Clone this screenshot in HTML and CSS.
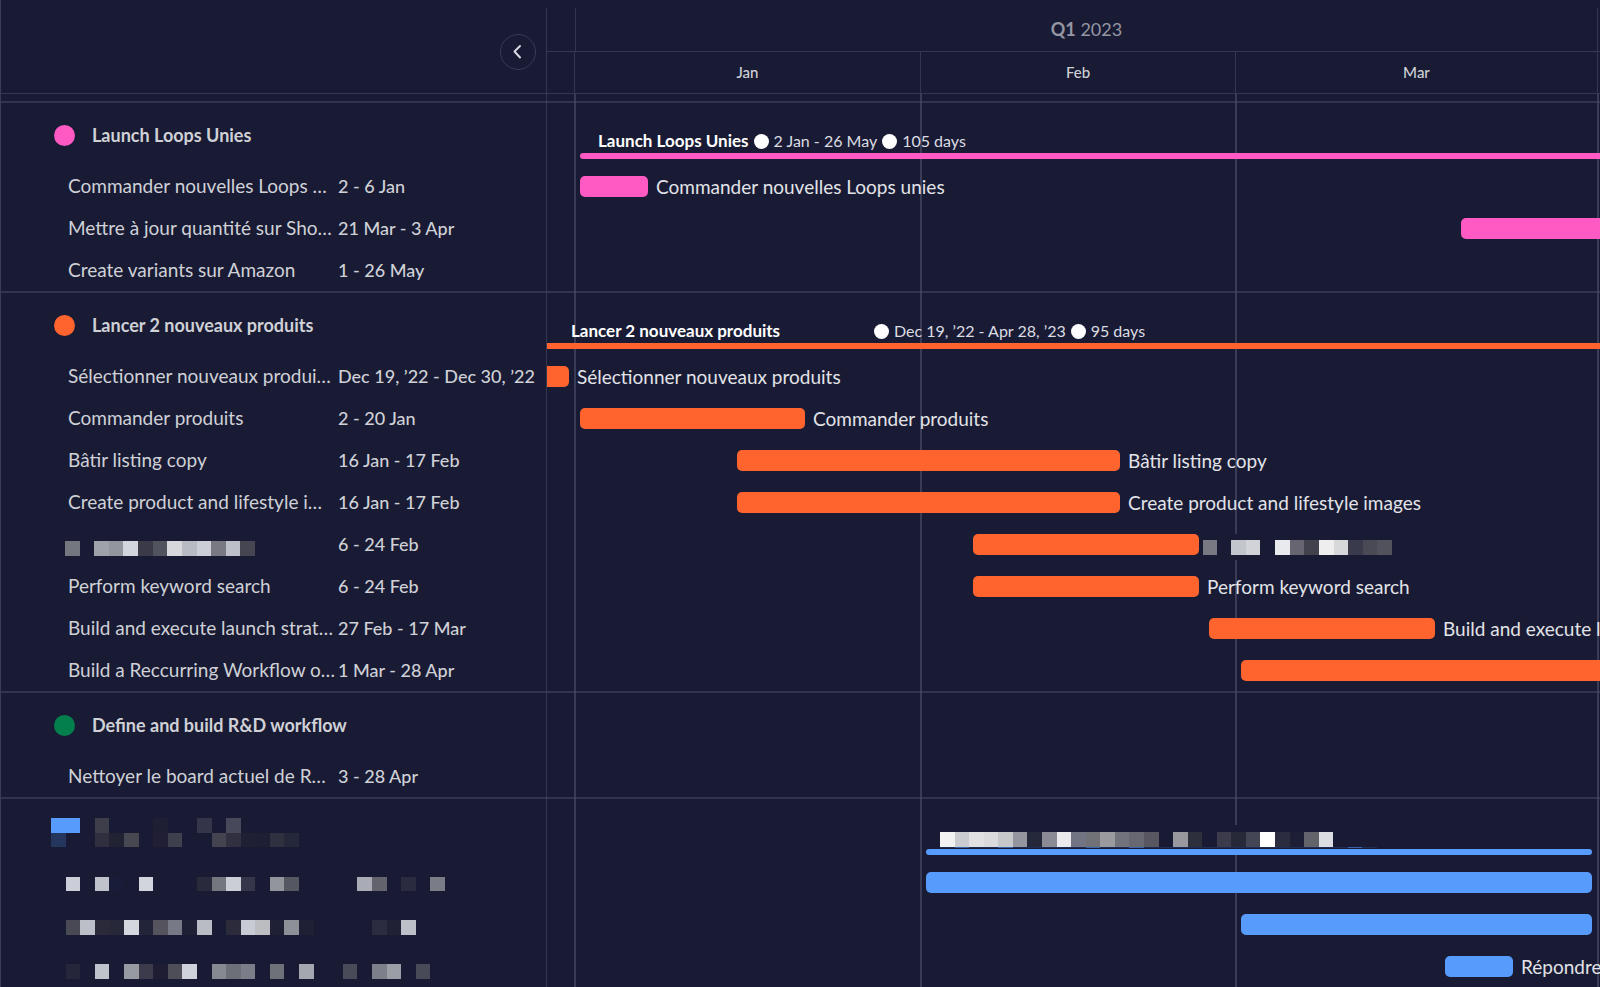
FILE: index.html
```html
<!DOCTYPE html>
<html lang="fr">
<head>
<meta charset="utf-8">
<title>Gantt – Q1 2023</title>
<link rel="stylesheet" href="styles.css">
</head>
<body>
<main class="gantt">
  <header class="head">
    <div class="head-side">
      <button class="collapse" type="button" aria-label="Collapse list">
        <svg viewBox="0 0 20 20" width="20" height="20" aria-hidden="true"><path d="M12 4 6.500 9.500l5.500 6"/></svg>
      </button>
    </div>
    <div class="head-time">
      <div class="quarters"><span></span><span class="quarter"><b>Q1</b> 2023</span><span></span></div>
      <div class="months"><span></span><span>Jan</span><span>Feb</span><span>Mar</span><span></span></div>
    </div>
  </header>

  <div class="body">
    <div class="lines" aria-hidden="true"><i></i><i></i><i></i><i></i><i></i></div>

    <section class="group pink">
      <div class="side">
        <h2 class="title"><i class="dot"></i>Launch Loops Unies</h2>
        <div class="item"><span>Commander nouvelles Loops …</span><span>2 - 6 Jan</span></div>
        <div class="item"><span>Mettre à jour quantité sur Sho…</span><span>21 Mar - 3 Apr</span></div>
        <div class="item"><span>Create variants sur Amazon</span><span>1 - 26 May</span></div>
      </div>
      <div class="time">
        <div class="summary">
          <p class="caption" style="--x:51"><b>Launch Loops Unies</b><i></i>2 Jan - 26 May<i></i>105 days</p>
          <div class="span" style="--x:33;--w:1040"></div>
        </div>
        <div class="row" style="--x:33;--w:68"><div class="bar"></div><span>Commander nouvelles Loops unies</span></div>
        <div class="row" style="--x:914;--w:160"><div class="bar"></div></div>
        <div class="row"></div>
      </div>
    </section>

    <section class="group orange">
      <div class="side">
        <h2 class="title"><i class="dot"></i>Lancer 2 nouveaux produits</h2>
        <div class="item"><span>Sélectionner nouveaux produi…</span><span>Dec 19, ’22 - Dec 30, ’22</span></div>
        <div class="item"><span>Commander produits</span><span>2 - 20 Jan</span></div>
        <div class="item"><span>Bâtir listing copy</span><span>16 Jan - 17 Feb</span></div>
        <div class="item"><span>Create product and lifestyle i…</span><span>16 Jan - 17 Feb</span></div>
        <div class="item"><span class="masked"><svg class="mosaic" viewBox="0 0 13 1" preserveAspectRatio="none" width="190" height="15" aria-hidden="true"><path fill="#757780" d="M0 0h1v1h-1z"/><path fill="#a0a2aa" d="M2 0h1v1h-1z"/><path fill="#94969e" d="M3 0h1v1h-1z"/><path fill="#d2d5dc" d="M4 0h1v1h-1z"/><path fill="#3a3a48" d="M5 0h1v1h-1z"/><path fill="#51535f" d="M6 0h1v1h-1z"/><path fill="#d7d8dc" d="M7 0h1v1h-1z"/><path fill="#b8bbc3" d="M8 0h1v1h-1z"/><path fill="#cbced6" d="M9 0h1v1h-1z"/><path fill="#797983" d="M10 0h1v1h-1z"/><path fill="#bdc0c9" d="M11 0h1v1h-1z"/><path fill="#454652" d="M12 0h1v1h-1z"/></svg></span><span>6 - 24 Feb</span></div>
        <div class="item"><span>Perform keyword search</span><span>6 - 24 Feb</span></div>
        <div class="item"><span>Build and execute launch strat…</span><span>27 Feb - 17 Mar</span></div>
        <div class="item"><span>Build a Reccurring Workflow o…</span><span>1 Mar - 28 Apr</span></div>
      </div>
      <div class="time">
        <div class="summary">
          <p class="caption wide" style="--x:24"><b>Lancer 2 nouveaux produits</b><i></i>Dec 19, ’22 - Apr 28, ’23<i></i>95 days</p>
          <div class="span open" style="--x:0;--w:1073"></div>
        </div>
        <div class="row" style="--x:0;--w:22"><div class="bar open"></div><span>Sélectionner nouveaux produits</span></div>
        <div class="row" style="--x:33;--w:225"><div class="bar"></div><span>Commander produits</span></div>
        <div class="row" style="--x:190;--w:383"><div class="bar"></div><span>Bâtir listing copy</span></div>
        <div class="row" style="--x:190;--w:383"><div class="bar"></div><span>Create product and lifestyle images</span></div>
        <div class="row" style="--x:426;--w:226"><div class="bar"></div><span class="masked"><svg class="mosaic" viewBox="0 0 13 1" preserveAspectRatio="none" width="190" height="15" aria-hidden="true"><path fill="#797983" d="M0.100 0h0.900v1h-0.900z"/><path fill="#c3c5cc" d="M2 0h1v1h-1z"/><path fill="#d2d3d8" d="M3 0h1v1h-1z"/><path fill="#e9eaed" d="M5 0h1v1h-1z"/><path fill="#666571" d="M6 0h1v1h-1z"/><path fill="#42424f" d="M7 0h1v1h-1z"/><path fill="#eeeeef" d="M8 0h1v1h-1z"/><path fill="#d7d8da" d="M9 0h1v1h-1z"/><path fill="#393b4d" d="M10 0h1v1h-1z"/><path fill="#494a55" d="M11 0h1v1h-1z"/><path fill="#52525c" d="M12 0h1v1h-1z"/></svg></span></div>
        <div class="row" style="--x:426;--w:226"><div class="bar"></div><span>Perform keyword search</span></div>
        <div class="row" style="--x:662;--w:226"><div class="bar"></div><span>Build and execute launch strategy</span></div>
        <div class="row" style="--x:694;--w:380"><div class="bar"></div></div>
      </div>
    </section>

    <section class="group green">
      <div class="side">
        <h2 class="title"><i class="dot"></i>Define and build R&amp;D workflow</h2>
        <div class="item"><span>Nettoyer le board actuel de R…</span><span>3 - 28 Apr</span></div>
      </div>
      <div class="time"></div>
    </section>

    <section class="group blue">
      <div class="side side-masked">
        <svg class="mosaic" viewBox="0 0 27 11" preserveAspectRatio="none" width="394" height="161" aria-hidden="true">
          <path fill="#579bfc" d="M0 0h2v1h-2z"/><path fill="#3e3e4a" d="M3 0h1v1h-1z"/><path fill="#1e1f33" d="M7 0h1v1h-1z"/><path fill="#35354a" d="M10 0h1v1h-1z"/><path fill="#474859" d="M12 0h1v1h-1z"/>
          <path fill="#24355e" d="M0 1h1v1h-1z"/><path fill="#2f2f3f" d="M3 1h1v1h-1z"/><path fill="#212334" d="M4 1h1v1h-1z"/><path fill="#474852" d="M5 1h1v1h-1z"/><path fill="#201f35" d="M7 1h1v1h-1z"/><path fill="#3f404e" d="M8 1h1v1h-1z"/><path fill="#43444f" d="M11 1h1v1h-1z"/><path fill="#303040" d="M12 1h1v1h-1z"/><path fill="#1f2033" d="M13 1h1v1h-1z"/><path fill="#1e1e34" d="M14 1h1v1h-1z"/><path fill="#2f3040" d="M15 1h1v1h-1z"/><path fill="#25273a" d="M16 1h1v1h-1z"/>
          <path fill="#cbced8" d="M1 4h1v1h-1z"/><path fill="#bfc2cb" d="M3 4h1v1h-1z"/><path fill="#191c38" d="M4 4h1v1h-1z"/><path fill="#d2d5de" d="M6 4h1v1h-1z"/><path fill="#292a3c" d="M10 4h1v1h-1z"/><path fill="#75777f" d="M11 4h1v1h-1z"/><path fill="#cbced7" d="M12 4h1v1h-1z"/><path fill="#36364a" d="M13 4h1v1h-1z"/><path fill="#93959d" d="M15 4h1v1h-1z"/><path fill="#555763" d="M16 4h1v1h-1z"/><path fill="#a9acb6" d="M21 4h1v1h-1z"/><path fill="#63636e" d="M22 4h1v1h-1z"/><path fill="#2a2b3e" d="M24 4h1v1h-1z"/><path fill="#7a7c87" d="M26 4h1v1h-1z"/>
          <path fill="#484955" d="M1 7h1v1h-1z"/><path fill="#bcbfc7" d="M2 7h1v1h-1z"/><path fill="#2a2a3a" d="M3 7h1v1h-1z"/><path fill="#272839" d="M4 7h1v1h-1z"/><path fill="#d4d7de" d="M5 7h1v1h-1z"/><path fill="#22243a" d="M6 7h1v1h-1z"/><path fill="#55535d" d="M7 7h1v1h-1z"/><path fill="#777986" d="M8 7h1v1h-1z"/><path fill="#1e2036" d="M9 7h1v1h-1z"/><path fill="#b9bcc4" d="M10 7h1v1h-1z"/><path fill="#2b2b3c" d="M12 7h1v1h-1z"/><path fill="#c8cbd3" d="M13 7h1v1h-1z"/><path fill="#bbbdc0" d="M14 7h1v1h-1z"/><path fill="#1f2036" d="M15 7h1v1h-1z"/><path fill="#8e9098" d="M16 7h1v1h-1z"/><path fill="#1f2036" d="M17 7h1v1h-1z"/><path fill="#2b2c3f" d="M22 7h1v1h-1z"/><path fill="#202135" d="M23 7h1v1h-1z"/><path fill="#bcbfc8" d="M24 7h1v1h-1z"/>
          <path fill="#252639" d="M1 10h1v1h-1z"/><path fill="#bfc3cb" d="M3 10h1v1h-1z"/><path fill="#989aa1" d="M5 10h1v1h-1z"/><path fill="#3b3b4b" d="M6 10h1v1h-1z"/><path fill="#1e1d33" d="M7 10h1v1h-1z"/><path fill="#4e4e58" d="M8 10h1v1h-1z"/><path fill="#cfd2da" d="M9 10h1v1h-1z"/><path fill="#878991" d="M11 10h1v1h-1z"/><path fill="#6e7079" d="M12 10h1v1h-1z"/><path fill="#7b7d88" d="M13 10h1v1h-1z"/><path fill="#6f7179" d="M15 10h1v1h-1z"/><path fill="#a4a7b0" d="M17 10h1v1h-1z"/><path fill="#4a4b58" d="M20 10h1v1h-1z"/><path fill="#7d7f8b" d="M22 10h1v1h-1z"/><path fill="#9b9ea5" d="M23 10h1v1h-1z"/><path fill="#494a58" d="M25 10h1v1h-1z"/>
        </svg>
      </div>
      <div class="time">
        <div class="summary">
          <p class="caption caption-masked" style="--x:393"><svg class="mosaic" viewBox="0 0 30 17" preserveAspectRatio="none" width="437" height="17" aria-hidden="true"><path fill="#f2f2f2" d="M0 0h1v15h-1z"/><path fill="#cbccd0" d="M1 0h1v15h-1z"/><path fill="#e1e1e4" d="M2 0h1v15h-1z"/><path fill="#dbdbdd" d="M3 0h1v15h-1z"/><path fill="#c7c8ca" d="M4 0h1v15h-1z"/><path fill="#94959f" d="M5 0h1v15h-1z"/><path fill="#25273a" d="M6 0h1v15h-1z"/><path fill="#8b8b96" d="M7 0h1v15h-1z"/><path fill="#ebebee" d="M8 0h1v15h-1z"/><path fill="#737483" d="M9 0h1v15h-1z"/><path fill="#717178" d="M10 0h1v15h-1z"/><path fill="#9a9a9f" d="M11 0h1v15h-1z"/><path fill="#73737d" d="M12 0h1v15h-1z"/><path fill="#686872" d="M13 0h1v15h-1z"/><path fill="#575661" d="M14 0h1v15h-1z"/><path fill="#99989e" d="M16 0h1v15h-1z"/><path fill="#2e2f3d" d="M17 0h1v15h-1z"/><path fill="#3b3b4b" d="M19 0h1v15h-1z"/><path fill="#272838" d="M20 0h1v15h-1z"/><path fill="#444555" d="M21 0h1v15h-1z"/><path fill="#fff" d="M22 0h1v15h-1z"/><path fill="#2b2c40" d="M23 0h1v15h-1z"/><path fill="#1c1f35" d="M24 0h1v15h-1z"/><path fill="#63636c" d="M25 0h1v15h-1z"/><path fill="#dcdde2" d="M26 0h1v15h-1z"/><path fill="#202d52" d="M0 15h30v1h-30z"/><path fill="#3a62a4" d="M1 15h1v1h-1zM4 15h1v1h-1zM10 15h1v1h-1zM13 15h1v1h-1zM28 15h1v1h-1z"/></svg></p>
          <div class="span" style="--x:379;--w:666"></div>
        </div>
        <div class="row" style="--x:379;--w:666"><div class="bar"></div></div>
        <div class="row" style="--x:694;--w:351"><div class="bar"></div></div>
        <div class="row" style="--x:898;--w:68"><div class="bar"></div><span>Répondre</span></div>
      </div>
    </section>
  </div>
</main>
</body>
</html>
```
FILE: styles.css
```css
:root {
  --bg: #191b34;
  --line: #353750;
  --grid: #3a3c57;
  --text: #cfd1d7;
  --side: 547px;
  /* pre, Jan, Feb, Mar, Apr */
  --cols: 27fr 346fr 315fr 362fr 3fr;
}

* { box-sizing: border-box; }

body {
  margin: 0;
  background: var(--bg);
  color: var(--text);
  font-family: Lato, "Liberation Sans", sans-serif;
  font-size: 19px;
  line-height: 24px;
  overflow: hidden;
}

h2, p { margin: 0; }

.gantt {
  display: flex;
  flex-direction: column;
  height: 100vh;
  overflow: hidden;
  border-left: 1px solid var(--grid);
}

/* header */
.head {
  display: grid;
  grid-template-columns: calc(var(--side) - 1px) 1fr;
  flex: none;
  padding-top: 8px;
  border-bottom: 1px solid var(--line);
}

.head-side {
  display: flex;
  align-items: center;
  justify-content: flex-end;
  padding-right: 10px;
  padding-top: 2px;
  border-right: 1px solid var(--line);
}

.collapse {
  display: flex;
  align-items: center;
  justify-content: center;
  width: 36px;
  height: 36px;
  padding: 0;
  background: none;
  border: 1px solid var(--grid);
  border-radius: 50%;
}

.collapse svg {
  fill: none;
  stroke: #d5d8df;
  stroke-width: 2;
  stroke-linecap: round;
  stroke-linejoin: round;
}

.quarters, .months {
  display: grid;
  align-items: stretch;
  text-align: center;
}

.quarters {
  grid-template-columns: 28fr 1022fr 3fr;
  height: 44px;
  border-bottom: 1px solid var(--line);
  color: #9496a3;
  font-size: 18px;
  line-height: 42px;
}

.months {
  grid-template-columns: var(--cols);
  height: 41px;
  font-size: 15px;
  font-weight: 500;
  line-height: 41px;
}

.quarters > * + *, .months > * + * { border-left: 1px solid var(--line); }

/* body */
.body {
  position: relative;
  flex: 1;
  padding-top: 7px;
}

.lines {
  position: absolute;
  inset: 0 0 0 calc(var(--side) - 2px);
  display: grid;
  grid-template-columns: var(--cols);
  border-left: 1px solid var(--line);
}

.lines > * + * { border-left: 2px solid var(--grid); }

.group {
  position: relative;
  display: grid;
  grid-template-columns: calc(var(--side) - 1px) 1fr;
  border-top: 2px solid rgba(75, 78, 105, 0.5);
}

.pink { --tone: #ff5ac4; }
.orange { --tone: #ff642e; }
.green { --tone: #037f4c; }
.blue { --tone: #579bfc; }

.title {
  display: flex;
  align-items: center;
  gap: 17px;
  height: 62px;
  padding: 2px 0 0 53px;
  font-size: 18px;
  font-weight: 700;
}

.dot {
  width: 21px;
  height: 21px;
  border-radius: 50%;
  background: var(--tone);
}

.item {
  display: grid;
  grid-template-columns: 270px 1fr;
  align-items: center;
  height: 42px;
  padding-left: 67px;
  font-size: 18px;
  font-weight: 500;
  white-space: nowrap;
}

.item span:first-child {
  font-size: 19px;
  font-weight: 400;
}

.mosaic {
  display: block;
  shape-rendering: crispEdges;
}

.item .masked {
  margin-left: -3px;
  padding-top: 8px;
}

.side-masked { padding: 19px 0 0 50px; }

/* timeline; --x and --w are in units of 1/1053 of its width */
.time {
  min-width: 0;
  overflow: hidden;
}

.summary {
  display: flex;
  flex-direction: column;
  height: 62px;
  padding-top: 26px;
}

.caption {
  display: flex;
  align-items: center;
  gap: 5px;
  height: 24px;
  margin-left: calc(var(--x) / 1053 * 100%);
  font-size: 16px;
  white-space: nowrap;
  color: #dcdde3;
}

.caption b {
  font-size: 17px;
  font-weight: 700;
  color: #fff;
}

.caption.wide b { width: 298px; }

.caption i {
  width: 15px;
  height: 15px;
  border-radius: 50%;
  background: #fff;
}

.caption-masked {
  align-self: flex-start;
  align-items: flex-end;
  background: var(--bg);
}

.span {
  width: calc(var(--w) / 1053 * 100%);
  height: 6px;
  margin-left: calc(var(--x) / 1053 * 100%);
  border-radius: 3px;
  background: var(--tone);
}

.row {
  display: flex;
  gap: 8px;
  height: 42px;
  padding: 11px 0 0 calc(var(--x) / 1053 * 100%);
  line-height: 22px;
  white-space: nowrap;
  color: #e2e3e8;
}

.row > * { flex: none; }

.bar {
  width: calc(var(--w) / (1053 - var(--x)) * 100%);
  height: 21px;
  border-radius: 5px;
  background: var(--tone);
}

.open {
  border-top-left-radius: 0;
  border-bottom-left-radius: 0;
}

.row .masked {
  align-self: flex-start;
  margin-left: -5px;
  padding: 6px 0 5px;
  background: var(--bg);
}
```
